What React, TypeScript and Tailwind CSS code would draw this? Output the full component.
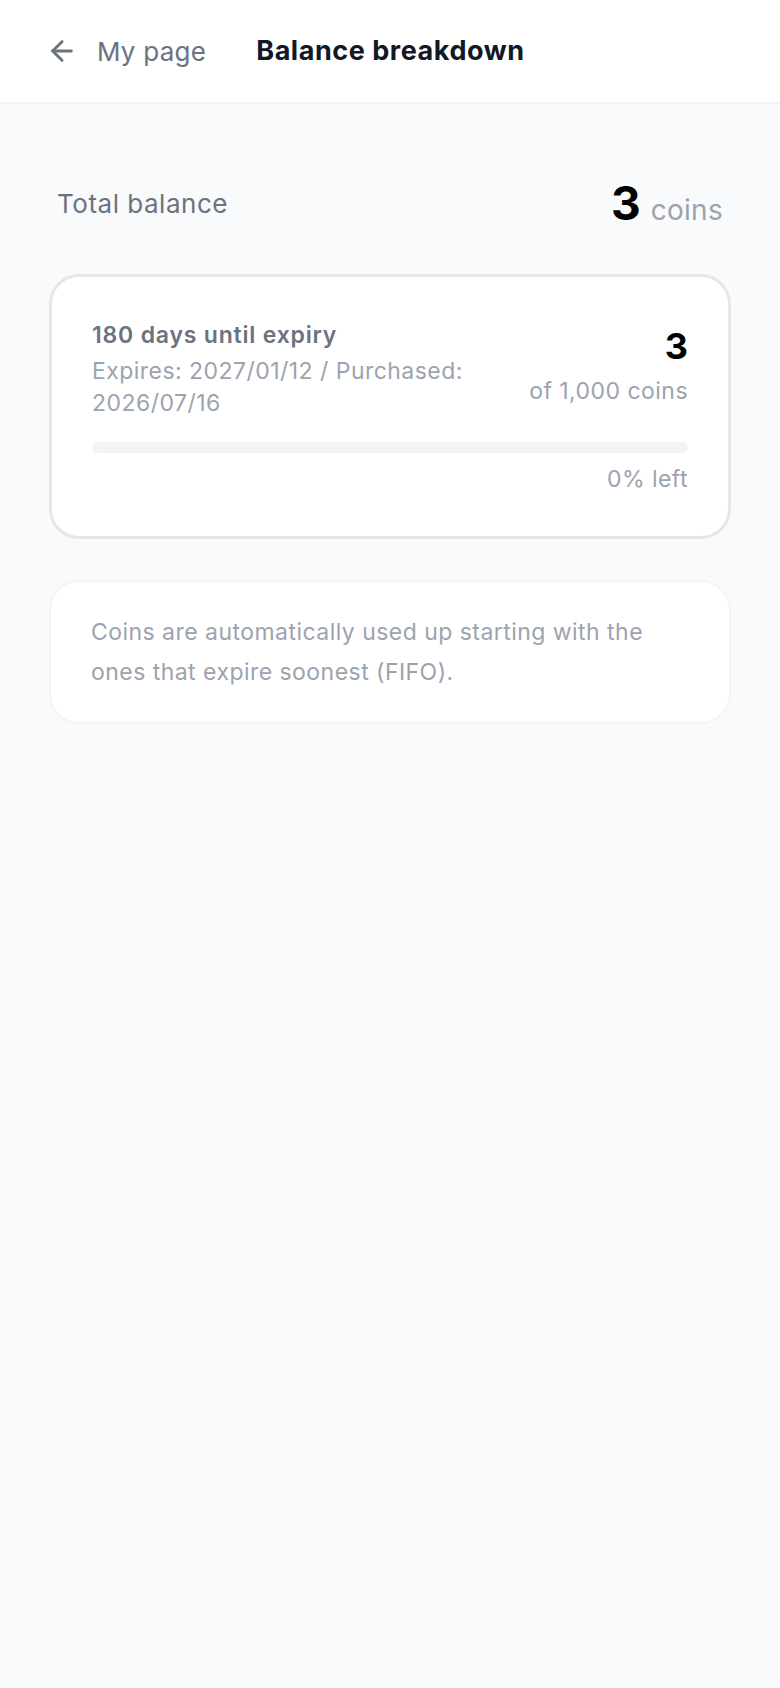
import { ArrowLeft } from 'lucide-react'

interface Lot {
  id: string
  daysLeft: number
  expires: string
  purchased: string
  remaining: number
  total: number
}

const lots: Lot[] = [
  { id: 'a', daysLeft: 180, expires: '2027/01/12', purchased: '2026/07/16', remaining: 3, total: 1000 },
]

function LotCard({ lot }: { lot: Lot }) {
  const pct = Math.floor((lot.remaining / lot.total) * 100)
  return (
    <div className="rounded-[30px] border-[3px] border-[#e5e7eb] bg-white p-[40px]">
      <div className="flex items-start justify-between gap-4">
        <div className="min-w-0 pt-[2px]">
          <p className="text-[23px] font-semibold leading-[33px] tracking-[0.035em] text-[#6b7280]">
            {lot.daysLeft} days until expiry
          </p>
          <p className="mt-[3px] text-[23px] leading-[32px] tracking-[0.02em] text-[#9ca3af]">
            Expires: {lot.expires} / Purchased: {lot.purchased}
          </p>
        </div>
        <div className="shrink-0 text-right">
          <div className="text-[36px] font-bold leading-[58px] text-black">{lot.remaining}</div>
          <div className="text-[23px] leading-[33px] tracking-[0.02em] text-[#9ca3af]">
            of {lot.total.toLocaleString('en-US')} coins
          </div>
        </div>
      </div>
      <div className="mt-[23px] h-[11px] overflow-hidden rounded-full bg-[#f3f4f6]">
        <div className="h-full rounded-full bg-[#9ca3af]" style={{ width: `${pct}%` }} />
      </div>
      <p className="mt-[10px] text-right text-[23px] leading-[33px] tracking-[0.02em] text-[#9ca3af]">
        {pct}% left
      </p>
    </div>
  )
}

export default function App() {
  const totalCoins = lots.reduce((sum, l) => sum + l.remaining, 0)
  return (
    <div className="min-h-screen bg-[#f9fafb] font-['Inter',sans-serif] antialiased">
      <header className="flex h-[104px] items-center border-b-2 border-[#f3f4f6] bg-white pl-[46px]">
        <button type="button" className="flex items-center gap-[19px] text-[#6b7280]">
          <ArrowLeft size={32} strokeWidth={2.2} />
          <span className="text-[26px] tracking-[0.01em]">My page</span>
        </button>
        <h1 className="ml-[50px] text-[27px] font-bold tracking-[0.02em] text-[#111827]">
          Balance breakdown
        </h1>
      </header>

      <main className="px-[49px] pt-[76px]">
        <div className="flex h-[46px] items-center justify-between px-[8px]">
          <span className="text-[26px] tracking-[0.02em] text-[#6b7280]">Total balance</span>
          <div className="flex items-baseline gap-[10px]">
            <span className="text-[46px] font-bold leading-none text-black">{totalCoins}</span>
            <span className="text-[28px] leading-none tracking-[0.01em] text-[#9ca3af]">coins</span>
          </div>
        </div>

        <div className="mt-[48px] flex flex-col gap-4">
          {lots.map((lot) => (
            <LotCard key={lot.id} lot={lot} />
          ))}
        </div>

        <div className="mt-[41px] rounded-[30px] border-2 border-[#f3f4f6] bg-white px-[40px] py-[30px]">
          <p className="text-[23px] leading-[40px] tracking-[0.02em] text-[#9ca3af]">
            Coins are automatically used up starting with the ones that expire soonest (FIFO).
          </p>
        </div>
      </main>
    </div>
  )
}
